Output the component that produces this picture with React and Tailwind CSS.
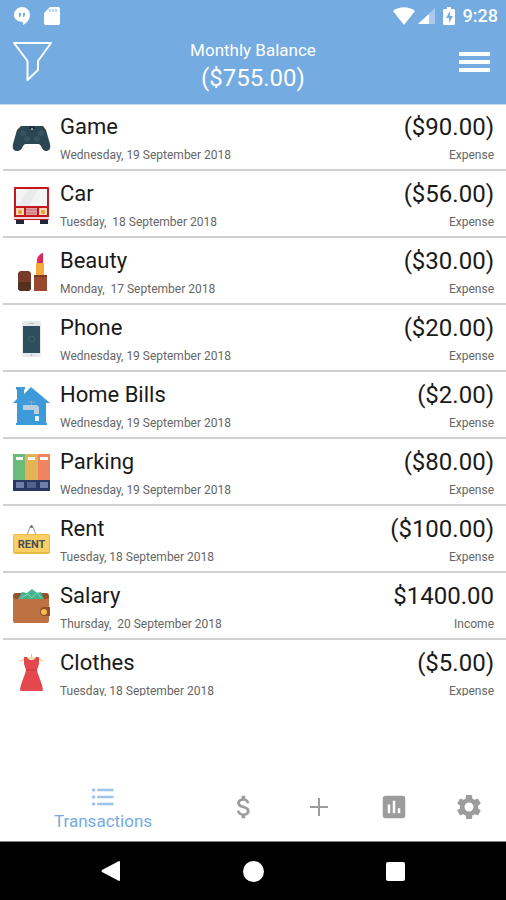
import { MdAttachMoney, MdInsertChart, MdSettings, MdFormatListBulleted } from 'react-icons/md';

function GameIcon() {
  return (
    <>
      <path d="M9 9h7l1 2h6l1-2h7l3 4 4 14c1 5-1 7-4 7-2 0-4-2-5-5l-2-2H13l-2 2c-1 3-3 5-6 5-3 0-5-2-4-7l4-14z" fill="#2b4552" />
      <path d="M16 9h8l-1 3h-6z" fill="#1c2f3a" />
      <circle cx="11" cy="16" r="3" fill="#38535f" />
      <circle cx="29" cy="16" r="3" fill="#38535f" />
      <circle cx="15" cy="22" r="3" fill="#38535f" />
      <circle cx="25" cy="22" r="3" fill="#38535f" />
      <circle cx="20" cy="12" r="1" fill="#a9bcc6" />
    </>
  );
}

function CarIcon() {
  return (
    <>
      <path d="M4 35h8v5H4zM28 35h8v5h-8z" fill="#1f2633" />
      <rect x="2" y="3" width="35" height="33" rx="1" fill="#c4161c" />
      <rect x="4" y="5" width="31" height="17" fill="#f3f4f6" />
      <path d="M17 5h9l-9 17H6z" fill="#e9eaed" />
      <rect x="4" y="24" width="8" height="7" fill="#f6d9b0" />
      <rect x="27" y="24" width="8" height="7" fill="#f6d9b0" />
      <circle cx="8" cy="28" r="2" fill="#eb9a2c" />
      <circle cx="31" cy="28" r="2" fill="#eb9a2c" />
      <path d="M14 24h11v7H14z" fill="#dda0a4" />
      <path d="M14 26h11M14 29h11" stroke="#cc6a70" strokeWidth="1" />
      <rect x="2" y="33" width="35" height="2" fill="#eed7d8" />
    </>
  );
}

function BeautyIcon() {
  return (
    <>
      <path d="M6 22l2-2h9l2 2v16l-2 2H8l-2-2z" fill="#7a3b2c" />
      <path d="M6 31h13v7l-2 2H8l-2-2z" fill="#56301f" />
      <path d="M25 12V8c1-3 3-5 6-6v10z" fill="#e8285f" />
      <path d="M28 12V4l3-2v10z" fill="#d9245f" />
      <path d="M24 12h8v13h-8z" fill="#f5ab3a" />
      <path d="M22 24h13v16H22z" fill="#98492f" />
      <path d="M22 24h13v2H22z" fill="#7c3927" />
    </>
  );
}

function PhoneIcon() {
  return (
    <>
      <rect x="10" y="3" width="19" height="36" rx="2" fill="#e4e9ec" />
      <rect x="11" y="8" width="17" height="27" fill="#2d4e5f" />
      <circle cx="19.500" cy="21" r="3" fill="none" stroke="#42616f" />
      <path d="M17 5.500h5" stroke="#b5bfc4" />
      <circle cx="19.500" cy="37" r="1" fill="#b5bfc4" />
    </>
  );
}

function HomeIcon() {
  return (
    <>
      <path d="M4 2h9v2l-1 1v4l7-7 19 16h-4v20h1v2H4v-2h1V18H1l4-4V5L4 4z" fill="#3d9bd9" />
      <path d="M16 17h7M19.500 16v4" stroke="#8fa5b4" strokeWidth="1" />
      <path d="M11 20h14l2 2v7h-5v-4H11z" fill="#b9cddc" />
      <path d="M23 31h4v5h-4z" fill="#e8f3fb" />
    </>
  );
}

function ParkingIcon() {
  return (
    <>
      <path d="M1 2h12v27H1z" fill="#6bbb7b" />
      <path d="M13 2h13v27H13z" fill="#e3b455" />
      <path d="M26 2h12v27H26z" fill="#ee8560" />
      <path d="M4 5h7v3H4zM16 5h7v3h-7zM28 5h8v3h-8z" fill="#fff" />
      <path d="M1 28h37v11H1z" fill="#273761" />
      <path d="M4 30h8v6H4zM28 30h8v6h-8z" fill="#6c7fa8" />
      <path d="M15 30h9v6h-9z" fill="#4f618d" />
    </>
  );
}

function RentIcon() {
  return (
    <>
      <path d="M15 16l3-8h3l3 8" fill="none" stroke="#8b95a1" strokeWidth="1" />
      <circle cx="19.500" cy="7.500" r="1.500" fill="#6e7883" />
      <rect x="1" y="15" width="37" height="20" rx="2" fill="#e9b84b" />
      <rect x="2" y="16" width="35" height="17" rx="1" fill="#fbce66" />
      <text x="19.500" y="29" textAnchor="middle" className="text-[11px] font-bold" fill="#475053">RENT</text>
    </>
  );
}

function SalaryIcon() {
  return (
    <>
      <path d="M1 10q0-3 3-3h30q3 0 3 3v4H1z" fill="#93502f" />
      <path d="M6 13l4-7 5 1 5-4 5 4 4-1 3 7z" fill="#42b38d" />
      <path d="M9 12l7-4 4 4 5-6 4 6" fill="none" stroke="#86d5b8" strokeWidth="1" />
      <path d="M1 11l3 2h30l3-1v23q0 2-2 2H3q-2 0-2-2z" fill="#be7142" />
      <path d="M32 21h6v9h-6q-4 0-4-4 0-5 4-5z" fill="#93502f" />
      <circle cx="32" cy="26" r="3" fill="#f2bd4b" />
    </>
  );
}

function ClothesIcon() {
  return (
    <>
      <path d="M8 8l7-3h9l7 3M19.500 5V1" fill="none" stroke="#f0bf58" strokeWidth="1" />
      <path d="M12 4h3c1 4 8 4 9 0h3v7l-2 6c1 6 5 12 6 20l-1 1H9l-1-1c1-8 5-14 6-20l-2-6z" fill="#e4484c" />
      <path d="M14 16h11v2H14z" fill="#d63f44" />
    </>
  );
}

// some of the stored dates carry a second space after the comma
const transactions = [
  { name: 'Game', date: 'Wednesday, 19 September 2018', amount: '($90.00)', type: 'Expense', Icon: GameIcon },
  { name: 'Car', date: 'Tuesday,  18 September 2018', amount: '($56.00)', type: 'Expense', Icon: CarIcon },
  { name: 'Beauty', date: 'Monday,  17 September 2018', amount: '($30.00)', type: 'Expense', Icon: BeautyIcon },
  { name: 'Phone', date: 'Wednesday, 19 September 2018', amount: '($20.00)', type: 'Expense', Icon: PhoneIcon },
  { name: 'Home Bills', date: 'Wednesday, 19 September 2018', amount: '($2.00)', type: 'Expense', Icon: HomeIcon },
  { name: 'Parking', date: 'Wednesday, 19 September 2018', amount: '($80.00)', type: 'Expense', Icon: ParkingIcon },
  { name: 'Rent', date: 'Tuesday, 18 September 2018', amount: '($100.00)', type: 'Expense', Icon: RentIcon },
  { name: 'Salary', date: 'Thursday,  20 September 2018', amount: '$1400.00', type: 'Income', Icon: SalaryIcon },
  { name: 'Clothes', date: 'Tuesday, 18 September 2018', amount: '($5.00)', type: 'Expense', Icon: ClothesIcon },
];

function StatusBar() {
  return (
    <div className="flex h-8 items-center justify-between pl-3 pr-2">
      <div className="flex items-center gap-3">
        <svg viewBox="0 0 20 20" className="size-5">
          <path d="M10 1a8 8 0 0 0-8 8c0 4 4 7 9 7v3c4-2 7-6 7-10a8 8 0 0 0-8-8z" fill="#fff" />
          <path d="M7 7h2v2l-1 2H7zM11 7h2v2l-1 2h-1z" fill="#74abe0" />
        </svg>
        <svg viewBox="0 0 16 20" className="h-5 w-4">
          <path d="M6 1h8a2 2 0 0 1 2 2v14a2 2 0 0 1-2 2H2a2 2 0 0 1-2-2V7z" fill="#fff" />
          <path d="M6 3v3M9 3v3M12 3v3" stroke="#74abe0" strokeWidth="1" />
        </svg>
      </div>
      <div className="flex items-center">
        <svg viewBox="0 0 22 18" className="h-[18px] w-[22px]">
          <path d="M0 4C6-1 16-1 22 4L11 18z" fill="#fff" />
        </svg>
        <svg viewBox="0 0 18 18" className="ml-[2px] size-[18px]">
          <path d="M18 1v16H1z" fill="#a9cbec" />
          <path d="M12 7v10H1z" fill="#fff" />
        </svg>
        <svg viewBox="0 0 12 18" className="ml-2 h-[18px] w-3">
          <path d="M4 0h4v2h3l1 1v14l-1 1H1l-1-1V3l1-1h3z" fill="#fff" />
          <path d="M7 4L3 11h3v5l4-7H7z" fill="#74abe0" />
        </svg>
        <span className="ml-2 text-lg font-medium leading-5">9:28</span>
      </div>
    </div>
  );
}

function Header() {
  return (
    <header className="relative shrink-0 bg-[#74abe0] text-white shadow-[0_1px_0_#c3dbf3]">
      <StatusBar />
      <div className="flex h-[72px] items-start justify-between">
        <button aria-label="Filter" className="mt-[9px] w-14 pl-3">
          <svg viewBox="0 0 41 42" className="h-[42px] w-[41px]" fill="none" stroke="#fff" strokeWidth="2">
            <path d="M2 2h37L26 20v9L15.500 39V20z" strokeLinejoin="round" />
          </svg>
        </button>
        <div className="mt-2 text-center">
          <h1 className="text-[17px] leading-5">Monthly Balance</h1>
          <p className="mt-1 text-2xl leading-7">($755.00)</p>
        </div>
        <button aria-label="Menu" className="mt-5 flex w-14 flex-col items-end gap-1 pr-4">
          <span className="h-1 w-[31px] bg-white" />
          <span className="h-1 w-[31px] bg-white" />
          <span className="h-1 w-[31px] bg-white" />
        </button>
      </div>
    </header>
  );
}

function TransactionRow({ item }) {
  const { name, date, amount, type, Icon } = item;
  return (
    <li className="ml-[3px] flex items-start border-b-2 border-[#d0d0d0] pb-[6px] pl-[9px] pr-3 pt-[9px]">
      <svg viewBox="0 0 40 40" className="mt-1 size-10 shrink-0" aria-hidden="true">
        <Icon />
      </svg>
      <div className="ml-2 flex-1">
        <div className="text-[22px] leading-7">{name}</div>
        <div className="mt-[6px] whitespace-pre text-xs leading-4 text-[#666]">{date}</div>
      </div>
      <div className="text-right">
        <div className="text-2xl leading-7">{amount}</div>
        <div className="mt-[6px] text-xs leading-4 text-[#666]">{type}</div>
      </div>
    </li>
  );
}

function TabBar() {
  return (
    <nav className="flex h-[70px] shrink-0 border-b border-[#808080] text-[#9c9c9c]">
      <button className="flex flex-[11] flex-col items-center justify-center text-[#74abe0]">
        <MdFormatListBulleted className="size-7 text-[#9cc4ec]" />
        <span className="text-[17px] leading-5">Transactions</span>
      </button>
      <button aria-label="Money" className="flex flex-[4] items-center justify-center">
        <MdAttachMoney className="size-[30px]" />
      </button>
      <button aria-label="Add" className="flex flex-[4] items-center justify-center">
        <svg viewBox="0 0 18 18" className="size-[18px]" stroke="currentColor" strokeWidth="2">
          <path d="M9 0v18M0 9h18" />
        </svg>
      </button>
      <button aria-label="Reports" className="flex flex-[4] items-center justify-center">
        <MdInsertChart className="size-[30px]" />
      </button>
      <button aria-label="Settings" className="flex flex-[4] items-center justify-center">
        <MdSettings className="size-[30px]" />
      </button>
    </nav>
  );
}

function SystemBar() {
  return (
    <div className="flex h-[58px] shrink-0 bg-black px-10">
      <button aria-label="Back" className="flex flex-1 items-center justify-center">
        <svg viewBox="0 0 20 22" className="h-[22px] w-5" fill="#fff">
          <path d="M18 1q1 0 1 1v18q0 1-1 1L1 12q-1-1 0-2z" />
        </svg>
      </button>
      <button aria-label="Home" className="flex flex-1 items-center justify-center">
        <span className="size-[21px] rounded-full bg-white" />
      </button>
      <button aria-label="Recent apps" className="flex flex-1 items-center justify-center">
        <span className="size-[19px] rounded-[2px] bg-white" />
      </button>
    </div>
  );
}

export default function App() {
  return (
    <div className="flex h-screen flex-col bg-white font-[Roboto,sans-serif] text-[#1a1a1a]">
      <Header />
      <main className="mb-[76px] min-h-0 flex-1 overflow-hidden">
        <ul>
          {transactions.map((item) => (
            <TransactionRow key={item.name} item={item} />
          ))}
        </ul>
      </main>
      <TabBar />
      <SystemBar />
    </div>
  );
}
